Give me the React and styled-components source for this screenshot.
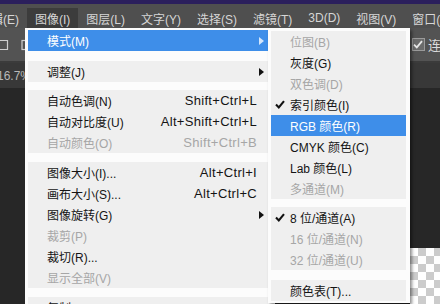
import styled, { createGlobalStyle } from "styled-components";

const GlobalStyle = createGlobalStyle`
  html, body {
    margin: 0;
    padding: 0;
    background: #282828;
  }
  body {
    font-family: "Liberation Sans", "Noto Sans CJK SC", sans-serif;
  }
`;

const mainMenu = [
  { gap: 10, items: [{ label: "模式(M)", arrow: true, active: true }] },
  { gap: 8, items: [{ label: "调整(J)", arrow: true }] },
  {
    gap: 9,
    items: [
      { label: "自动色调(N)", keys: "Shift+Ctrl+L" },
      { label: "自动对比度(U)", keys: "Alt+Shift+Ctrl+L" },
      { label: "自动颜色(O)", keys: "Shift+Ctrl+B", disabled: true },
    ],
  },
  {
    gap: 9,
    items: [
      { label: "图像大小(I)...", keys: "Alt+Ctrl+I" },
      { label: "画布大小(S)...", keys: "Alt+Ctrl+C" },
      { label: "图像旋转(G)", arrow: true },
      { label: "裁剪(P)", disabled: true },
      { label: "裁切(R)..." },
      { label: "显示全部(V)", disabled: true },
    ],
  },
  { gap: 0, items: [{ label: "复制(D)..." }] },
];

const modeMenu = [
  {
    gap: 8,
    items: [
      { label: "位图(B)", disabled: true },
      { label: "灰度(G)" },
      { label: "双色调(D)", disabled: true },
      { label: "索引颜色(I)", checked: true },
      { label: "RGB 颜色(R)", active: true },
      { label: "CMYK 颜色(C)" },
      { label: "Lab 颜色(L)" },
      { label: "多通道(M)", disabled: true },
    ],
  },
  {
    gap: 10,
    items: [
      { label: "8 位/通道(A)", checked: true },
      { label: "16 位/通道(N)", disabled: true },
      { label: "32 位/通道(U)", disabled: true },
    ],
  },
  { gap: 0, items: [{ label: "颜色表(T)..." }] },
];

const menuBarItems = [
  "编辑(E)",
  "图像(I)",
  "图层(L)",
  "文字(Y)",
  "选择(S)",
  "滤镜(T)",
  "3D(D)",
  "视图(V)",
  "窗口(W)",
];

const Screen = styled.div`
  position: relative;
  width: 440px;
  height: 304px;
  overflow: hidden;
  display: flex;
  flex-direction: column;
  background: #282828;
`;

const TitleStrip = styled.div`
  height: 4px;
  background: #2b1f5c;
`;

const MenuBar = styled.div`
  height: 24px;
  display: flex;
  align-items: stretch;
  background: #4f4f4f;
  margin-left: -29px;
  white-space: nowrap;
`;

const MenuBarItem = styled.div`
  display: flex;
  align-items: center;
  padding: 0 8px;
  margin-top: 4px;
  font-size: 12px;
  color: #d6d6d6;
  background: ${(p) => (p.$open ? "#3c3c3c" : "transparent")};
`;

const OptionsBar = styled.div`
  height: 33px;
  display: flex;
  align-items: center;
  gap: 12px;
  background: #535353;
  border-bottom: 2px solid #3b3b3b;
`;

const ToolGlyph = styled.svg`
  flex: none;
  width: 9px;
  height: 12px;
`;

const CheckOption = styled.div`
  margin-left: auto;
  margin-right: -14px;
  display: flex;
  align-items: center;
  gap: 3px;
  font-size: 13px;
  color: #dcdcdc;
`;

const CheckBox = styled.div`
  width: 11px;
  height: 11px;
  border: 1px solid #9a9a9a;
  background: #6b6b6b;
  display: flex;
  align-items: center;
  justify-content: center;
`;

const TabBar = styled.div`
  height: 25px;
  display: flex;
  align-items: center;
  background: #383838;
  font-size: 12px;
  color: #b8b8b8;
`;

const Zoom = styled.span`
  margin-left: -3px;
`;

const Workspace = styled.div`
  flex: 1;
  display: flex;
  justify-content: flex-end;
  align-items: flex-end;
  background: #272727;
`;

const Canvas = styled.div`
  width: 30px;
  height: 56px;
  background-color: #ffffff;
  background-image: conic-gradient(
    #cccccc 25%,
    #ffffff 0 50%,
    #cccccc 0 75%,
    #ffffff 0
  );
  background-size: 16px 16px;
`;

const Menu = styled.div`
  position: absolute;
  top: 28px;
  left: ${(p) => p.$left}px;
  width: ${(p) => p.$width}px;
  box-sizing: border-box;
  padding: ${(p) => p.$pad};
  display: flex;
  flex-direction: column;
  background: #fcfcfc;
  box-shadow: ${(p) => (p.$shadow ? "2px 2px 3px rgba(0, 0, 0, 0.45)" : "none")};
  z-index: ${(p) => p.$z};
`;

const Group = styled.div`
  background: #efefef;
  display: flex;
  flex-direction: column;
  margin-bottom: ${(p) => p.$gap}px;
`;

const Row = styled.div`
  height: 21px;
  display: flex;
  align-items: center;
  padding: 0 3px 0 4px;
  font-size: 12px;
  white-space: nowrap;
  background: ${(p) => (p.$active ? "#3e8ee9" : "transparent")};
  color: ${(p) => (p.$active ? "#ffffff" : p.$disabled ? "#a6a6a6" : "#141414")};
`;

const Gutter = styled.div`
  width: 15px;
  flex: none;
  display: flex;
  align-items: center;
`;

const Label = styled.span`
  flex: 1;
`;

const Keys = styled.span`
  font-size: 13px;
  letter-spacing: 0.3px;
  margin-right: 8px;
`;

const Arrow = styled.span`
  width: 0;
  height: 0;
  border-left: 5px solid ${(p) => (p.$active ? "#d4e6fb" : "#111")};
  border-top: 4px solid transparent;
  border-bottom: 4px solid transparent;
  margin-right: 1px;
`;

const Check = () => (
  <svg width="10" height="9" viewBox="0 0 10 9">
    <path d="M1 4.6 L3.8 7.4 L9 1.2" fill="none" stroke="#111" strokeWidth="2.1" />
  </svg>
);

const MenuPanel = ({ groups, left, width, pad, z, shadow }) => (
  <Menu $left={left} $width={width} $pad={pad} $z={z} $shadow={shadow}>
    {groups.map((group, gi) => (
      <Group key={gi} $gap={group.gap}>
        {group.items.map((item) => (
          <Row key={item.label} $active={item.active} $disabled={item.disabled}>
            <Gutter>{item.checked && <Check />}</Gutter>
            <Label>{item.label}</Label>
            {item.keys && <Keys>{item.keys}</Keys>}
            {item.arrow && <Arrow $active={item.active} />}
          </Row>
        ))}
      </Group>
    ))}
  </Menu>
);

export default function App() {
  return (
    <>
      <GlobalStyle />
      <Screen>
        <TitleStrip />
        <MenuBar>
          {menuBarItems.map((name) => (
            <MenuBarItem key={name} $open={name === "图像(I)"}>
              {name}
            </MenuBarItem>
          ))}
        </MenuBar>
        <OptionsBar>
          <ToolGlyph viewBox="0 0 9 12">
            <path d="M0 1.5 H7.5 V10.5 H0" fill="none" stroke="#cfcfcf" strokeWidth="1.2" />
          </ToolGlyph>
          <ToolGlyph viewBox="0 0 9 12">
            <rect x="1" y="1.5" width="8" height="9" fill="none" stroke="#cfcfcf" strokeWidth="1.2" />
          </ToolGlyph>
          <CheckOption>
            <CheckBox>
              <svg width="10" height="9" viewBox="0 0 10 9">
                <path d="M1 4.6 L3.8 7.4 L9 1.2" fill="none" stroke="#e6e6e6" strokeWidth="1.8" />
              </svg>
            </CheckBox>
            连续
          </CheckOption>
        </OptionsBar>
        <TabBar>
          <Zoom>16.7%</Zoom>
        </TabBar>
        <Workspace>
          <Canvas />
        </Workspace>
        <MenuPanel groups={mainMenu} left={25} width={250} pad="2px 7px 2px 3px" z={1} />
        <MenuPanel groups={modeMenu} left={268} width={142} pad="3px 4px 2px 3px" z={2} shadow />
      </Screen>
    </>
  );
}
